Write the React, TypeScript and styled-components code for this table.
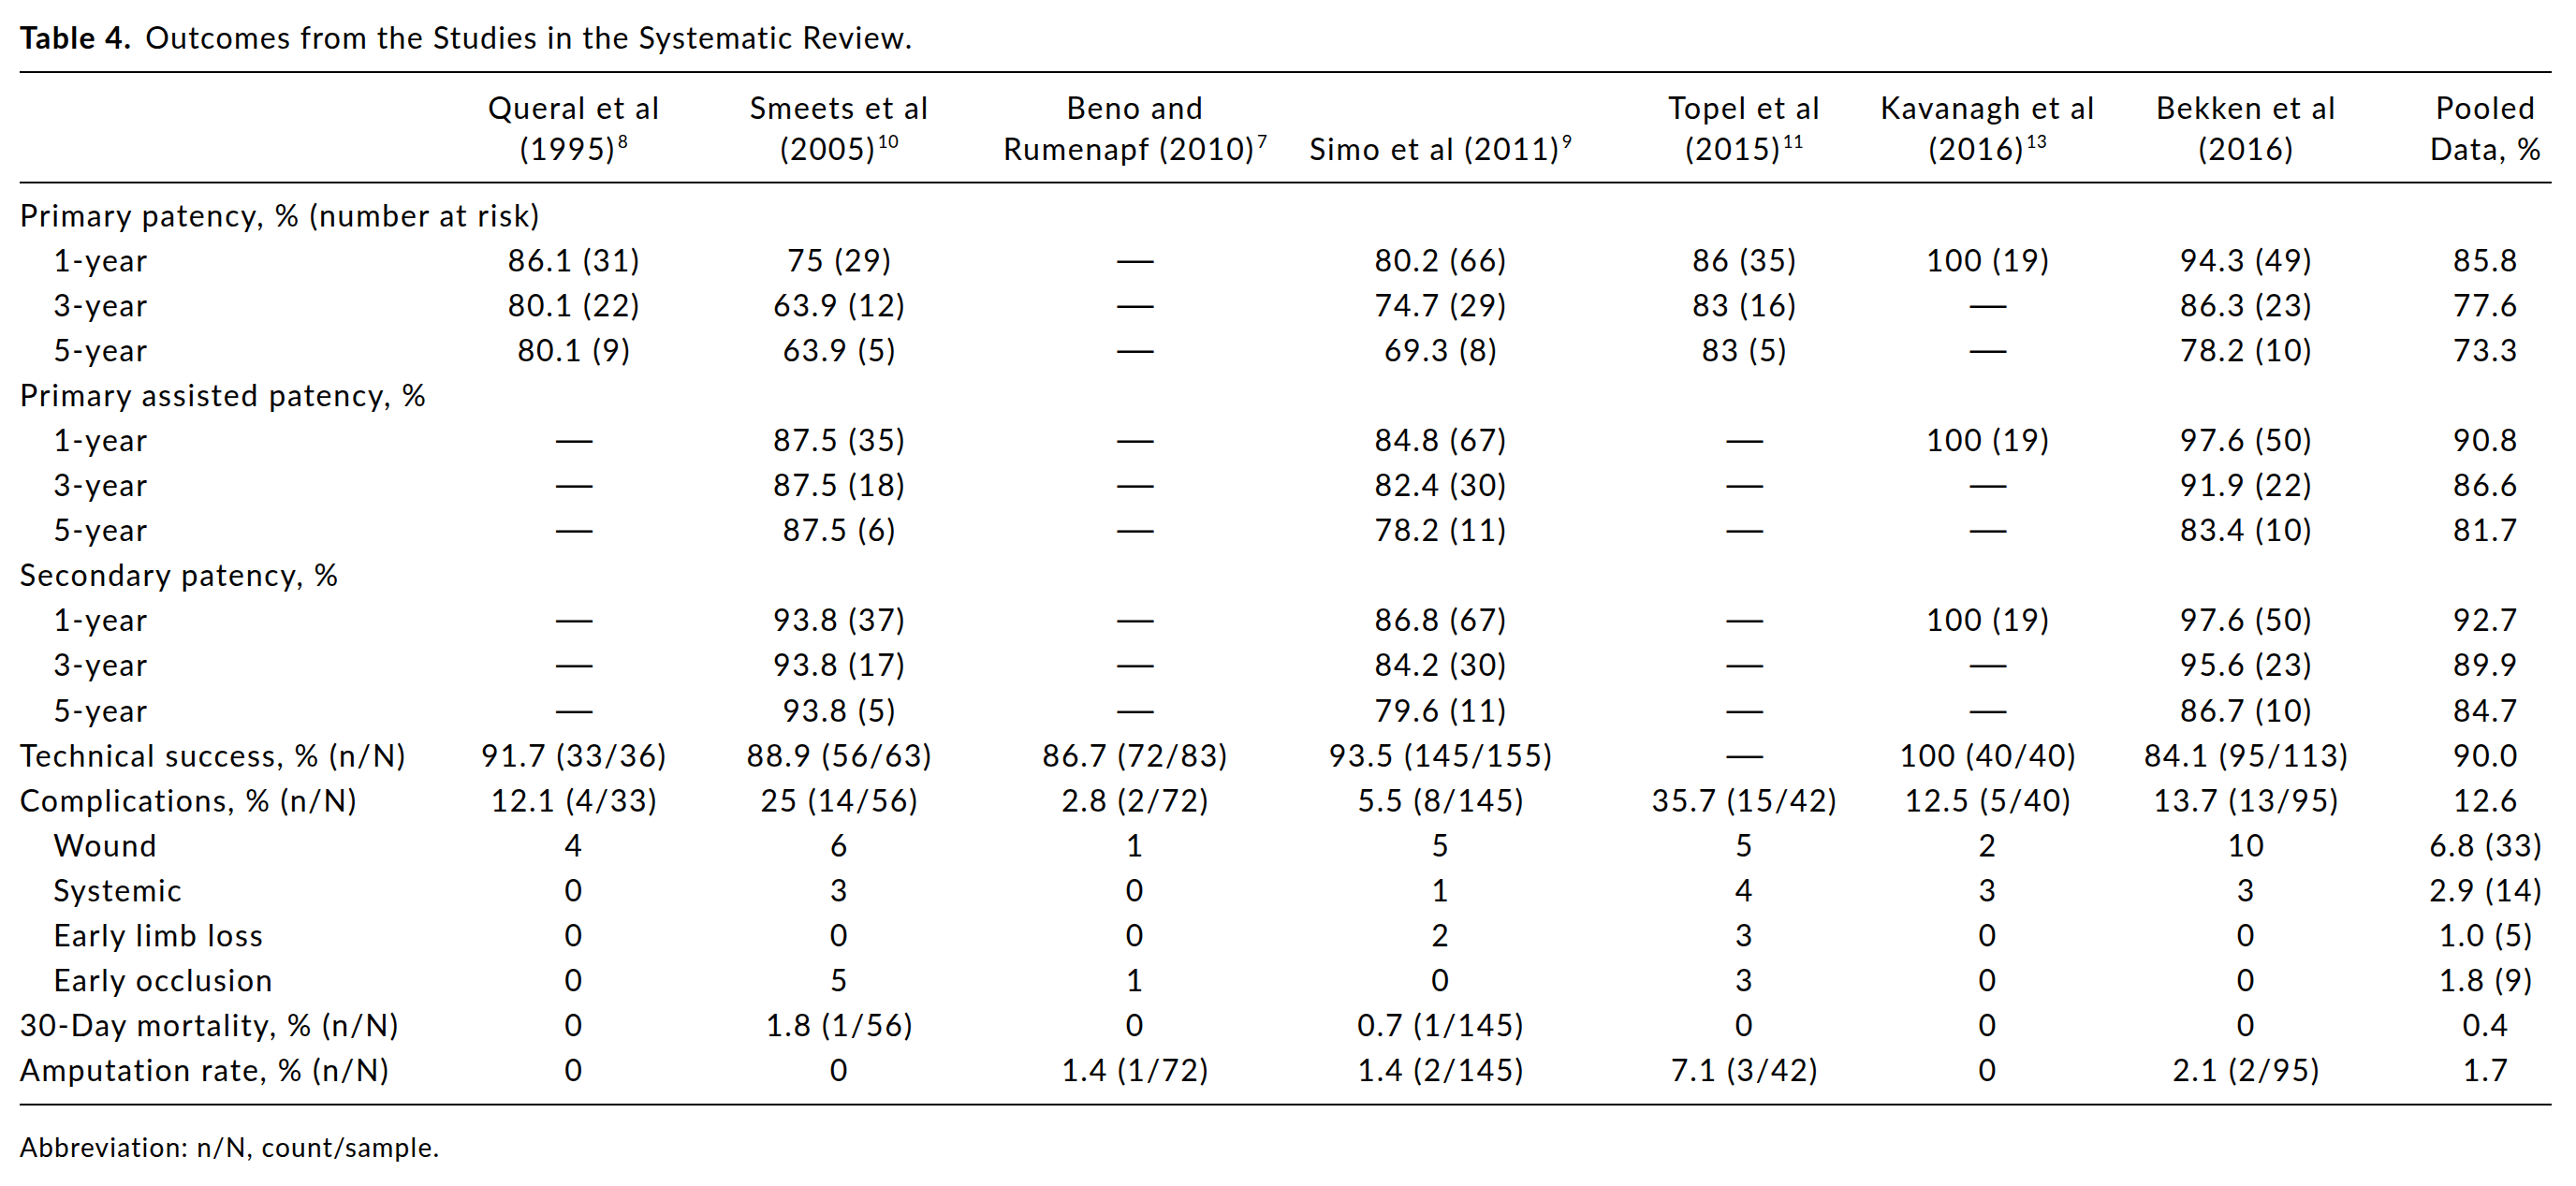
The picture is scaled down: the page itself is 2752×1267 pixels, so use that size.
import styled, { createGlobalStyle } from "styled-components";

const GlobalStyle = createGlobalStyle`
  html, body {
    margin: 0;
    padding: 0;
    background: #ffffff;
  }
  body {
    font-family: Lato, "Noto Sans", sans-serif;
    color: #000000;
  }
`;

// column widths in px, first one is the row label column
const COLS = [451, 283, 300, 322, 325, 292, 268, 266, 198];
// small nudges so each column's contents sit where the printed table has them
const SHIFTS = [0, -8, -3, 0, 16, -4, 5, 29];

const gridCols = COLS.map((c) => `${c}px`).join(" ");

const Page = styled.div`
  padding: 20px 26px 0 21px;
  width: 2705px;
`;

const Caption = styled.div`
  font-size: 32px;
  line-height: 40px;
  letter-spacing: 1.4px;
  margin-bottom: 16px;
`;

const CaptionLabel = styled.span`
  font-weight: 700;
  margin-right: 14px;
`;

const Table = styled.div`
  border-top: 2px solid #000;
  border-bottom: 2px solid #000;
  font-size: 32px;
  letter-spacing: 1.8px;
`;

const Head = styled.div`
  display: grid;
  grid-template-columns: ${gridCols};
  align-items: end;
  padding: 15px 0 14px;
  border-bottom: 2px solid #000;
  line-height: 43.5px;
`;

const HeadCell = styled.div<{ $shift?: number }>`
  text-align: center;
  white-space: nowrap;
  padding-left: ${(p) => Math.max(0, (p.$shift || 0) * 2)}px;
  padding-right: ${(p) => Math.max(0, -(p.$shift || 0) * 2)}px;
`;

const Sup = styled.sup`
  font-size: 0.58em;
  line-height: 0;
  vertical-align: 0.66em;
  margin-left: 2px;
  letter-spacing: 0.5px;
`;

const Body = styled.div`
  padding: 10px 0 12px;
  line-height: 48.05px;
`;

const Line = styled.div`
  display: grid;
  grid-template-columns: ${gridCols};
  height: 48.05px;
`;

const Section = styled.div`
  height: 48.05px;
  white-space: nowrap;
`;

const Label = styled.div<{ $sub?: boolean }>`
  padding-left: ${(p) => (p.$sub ? 36 : 0)}px;
  white-space: nowrap;
`;

const Cell = styled.div<{ $shift: number }>`
  text-align: center;
  white-space: nowrap;
  padding-left: ${(p) => Math.max(0, p.$shift * 2)}px;
  padding-right: ${(p) => Math.max(0, -p.$shift * 2)}px;
`;

// the printed dash is a long, thin rule – Liberation Sans has a full-em dash
const Dash = styled.span`
  font-family: "Liberation Sans", Arial, sans-serif;
  font-size: 39px;
  letter-spacing: 0;
  line-height: 0;
`;

const Footnote = styled.div`
  margin-top: 26px;
  font-size: 28px;
  line-height: 36px;
  letter-spacing: 1.25px;
`;

type Row =
  | { section: string }
  | { label: string; sub?: boolean; values: string[] };

const D = "—";

const HEADERS = [
  <>Queral et al<br />(1995)<Sup>8</Sup></>,
  <>Smeets et al<br />(2005)<Sup>10</Sup></>,
  <>Beno and<br />Rumenapf (2010)<Sup>7</Sup></>,
  <>Simo et al (2011)<Sup>9</Sup></>,
  <>Topel et al<br />(2015)<Sup>11</Sup></>,
  <>Kavanagh et al<br />(2016)<Sup>13</Sup></>,
  <>Bekken et al<br />(2016)</>,
  <>Pooled<br />Data, %</>,
];

const ROWS: Row[] = [
  { section: "Primary patency, % (number at risk)" },
  { label: "1-year", sub: true, values: ["86.1 (31)", "75 (29)", D, "80.2 (66)", "86 (35)", "100 (19)", "94.3 (49)", "85.8"] },
  { label: "3-year", sub: true, values: ["80.1 (22)", "63.9 (12)", D, "74.7 (29)", "83 (16)", D, "86.3 (23)", "77.6"] },
  { label: "5-year", sub: true, values: ["80.1 (9)", "63.9 (5)", D, "69.3 (8)", "83 (5)", D, "78.2 (10)", "73.3"] },
  { section: "Primary assisted patency, %" },
  { label: "1-year", sub: true, values: [D, "87.5 (35)", D, "84.8 (67)", D, "100 (19)", "97.6 (50)", "90.8"] },
  { label: "3-year", sub: true, values: [D, "87.5 (18)", D, "82.4 (30)", D, D, "91.9 (22)", "86.6"] },
  { label: "5-year", sub: true, values: [D, "87.5 (6)", D, "78.2 (11)", D, D, "83.4 (10)", "81.7"] },
  { section: "Secondary patency, %" },
  { label: "1-year", sub: true, values: [D, "93.8 (37)", D, "86.8 (67)", D, "100 (19)", "97.6 (50)", "92.7"] },
  { label: "3-year", sub: true, values: [D, "93.8 (17)", D, "84.2 (30)", D, D, "95.6 (23)", "89.9"] },
  { label: "5-year", sub: true, values: [D, "93.8 (5)", D, "79.6 (11)", D, D, "86.7 (10)", "84.7"] },
  { label: "Technical success, % (n/N)", values: ["91.7 (33/36)", "88.9 (56/63)", "86.7 (72/83)", "93.5 (145/155)", D, "100 (40/40)", "84.1 (95/113)", "90.0"] },
  { label: "Complications, % (n/N)", values: ["12.1 (4/33)", "25 (14/56)", "2.8 (2/72)", "5.5 (8/145)", "35.7 (15/42)", "12.5 (5/40)", "13.7 (13/95)", "12.6"] },
  { label: "Wound", sub: true, values: ["4", "6", "1", "5", "5", "2", "10", "6.8 (33)"] },
  { label: "Systemic", sub: true, values: ["0", "3", "0", "1", "4", "3", "3", "2.9 (14)"] },
  { label: "Early limb loss", sub: true, values: ["0", "0", "0", "2", "3", "0", "0", "1.0 (5)"] },
  { label: "Early occlusion", sub: true, values: ["0", "5", "1", "0", "3", "0", "0", "1.8 (9)"] },
  { label: "30-Day mortality, % (n/N)", values: ["0", "1.8 (1/56)", "0", "0.7 (1/145)", "0", "0", "0", "0.4"] },
  { label: "Amputation rate, % (n/N)", values: ["0", "0", "1.4 (1/72)", "1.4 (2/145)", "7.1 (3/42)", "0", "2.1 (2/95)", "1.7"] },
];

export default function App() {
  return (
    <>
      <GlobalStyle />
      <Page>
        <Caption>
          <CaptionLabel>Table 4.</CaptionLabel>
          Outcomes from the Studies in the Systematic Review.
        </Caption>
        <Table>
          <Head>
            <HeadCell />
            {HEADERS.map((h, i) => (
              <HeadCell key={i} $shift={SHIFTS[i]}>
                {h}
              </HeadCell>
            ))}
          </Head>
          <Body>
            {ROWS.map((row, r) =>
              "section" in row ? (
                <Section key={r}>{row.section}</Section>
              ) : (
                <Line key={r}>
                  <Label $sub={row.sub}>{row.label}</Label>
                  {row.values.map((v, i) => (
                    <Cell key={i} $shift={SHIFTS[i]}>
                      {v === D ? <Dash>{v}</Dash> : v}
                    </Cell>
                  ))}
                </Line>
              )
            )}
          </Body>
        </Table>
        <Footnote>Abbreviation: n/N, count/sample.</Footnote>
      </Page>
    </>
  );
}
